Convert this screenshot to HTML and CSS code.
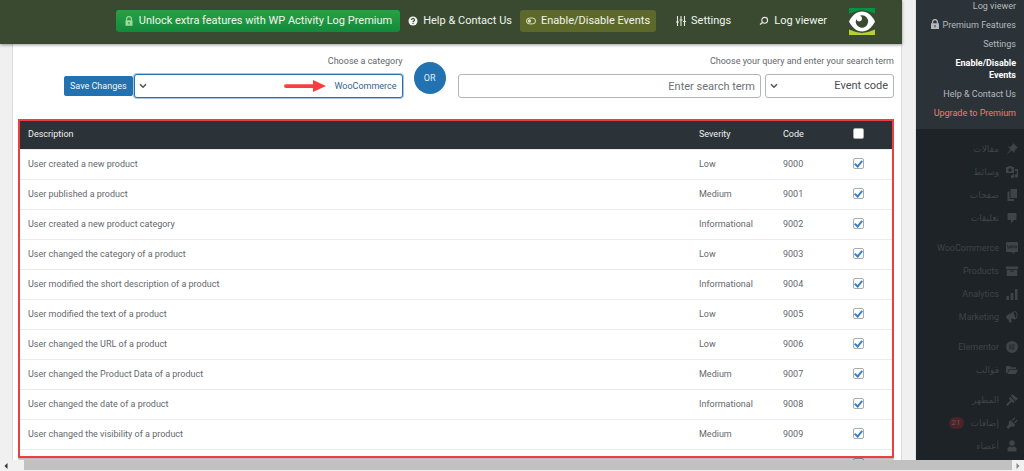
FILE: index.html
```html
<!DOCTYPE html>
<html lang="en">
<head>
<meta charset="utf-8">
<title>Enable/Disable Events</title>
<link rel="stylesheet" href="styles.css">
</head>
<body>
<div class="screen">
  <main class="main">
    <nav class="topbar" aria-label="Activity log">
      <a class="nav-link nav-link--premium" href="#"><svg class="icon" viewBox="0 0 10 10"><path d="M2.6 4.5V3a2.4 2.4 0 0 1 4.8 0v1.500" fill="none" stroke="#9bdb9d" stroke-width="1.200"/><path fill="#9bdb9d" fill-rule="evenodd" d="M1.500 4.300h7v5.500h-7zM4.500 6v2.200h1V6z"/></svg>Unlock extra features with WP Activity Log Premium</a>
      <a class="nav-link nav-link--help" href="#"><svg class="icon" viewBox="0 0 10 10"><circle cx="5" cy="5" r="4.500" fill="#f2f4f0"/><path d="M3.500 4a1.500 1.400 0 1 1 2.300 1.100Q5 5.500 5 6.300M5 7v1.100" fill="none" stroke="#394a30" stroke-width="1.200"/></svg>Help &amp; Contact Us</a>
      <a class="nav-link nav-link--active" href="#"><svg class="icon" viewBox="0 0 10 10"><rect x=".5" y="2.100" width="9" height="5.800" rx="2.900" fill="none" stroke="#dde0c4"/><circle cx="3.400" cy="5" r="1.700" fill="#dde0c4"/></svg>Enable/Disable Events</a>
      <a class="nav-link nav-link--settings" href="#"><svg class="icon" viewBox="0 0 10 10"><path d="M1.500 0v10M5 0v10M8.500 0v10M0 6h3M3.500 4h3M7 5.500h3" fill="none" stroke="#e6e9e2" stroke-width="1.100"/></svg>Settings</a>
      <a class="nav-link nav-link--viewer" href="#"><svg class="icon" viewBox="0 0 10 10"><circle cx="5.700" cy="4.300" r="2.900" fill="none" stroke="#e6e9e2" stroke-width="1.100"/><path d="M3.600 6.400 1 8.500" stroke="#e6e9e2" stroke-width="1.300"/></svg>Log viewer</a>
      <svg class="logo" viewBox="0 0 26 27" role="img" aria-label="Activity log logo"><path fill="#009444" d="M0 0h26v5.500L19 3.500 13 2 7 3.500 0 5.500z"/><path fill="#b5cf34" d="M0 27h26v-5.500l-7 2.500-6 1-6-1-7-2.500z"/><path fill="#fff" d="M0 13.500C3 7.500 7.500 3.500 13 3.500S23 7.500 26 13.500C23 19.500 18.500 23.500 13 23.500S3 19.500 0 13.500z"/><path fill="#394a30" d="M13 7.300a6.200 6.200 0 1 1-5.700 3.700 2.900 2.900 0 1 0 3.600-3.300z"/></svg>
    </nav>
    <section class="panel">
      <form class="filters">
        <div class="field field--category">
          <label class="field-label" for="category">Choose a category</label>
          <div class="controls controls--category">
            <button class="save" type="button">Save Changes</button>
            <div class="select select--focus">
              <select id="category" dir="rtl"><option>WooCommerce</option></select>
              <svg class="chevron" viewBox="0 0 8 6"><path d="M1 1.200 4 4.200 7 1.200" fill="none" stroke="#555" stroke-width="1.600"/></svg>
              <svg class="arrow" viewBox="0 0 42 12"><path fill="#f93e3e" d="M2 4.200h27V0l13 6-13 6V8H2a1.900 1.900 0 0 1 0-3.800z"/></svg>
            </div>
          </div>
        </div>
        <span class="or">OR</span>
        <div class="field field--search">
          <label class="field-label" for="term">Choose your query and enter your search term</label>
          <div class="controls controls--search">
            <input class="term" id="term" type="text" dir="rtl" placeholder="Enter search term">
            <div class="select select--query">
              <select aria-label="Query" dir="rtl"><option>Event code</option></select>
              <svg class="chevron" viewBox="0 0 8 6"><path d="M1 1.200 4 4.200 7 1.200" fill="none" stroke="#555" stroke-width="1.600"/></svg>
            </div>
          </div>
        </div>
      </form>
      <div class="events-wrap">
        <table class="events">
          <thead><tr><th>Description</th><th class="severity">Severity</th><th class="code">Code</th><th class="tick"><input type="checkbox" aria-label="Select all"></th></tr></thead>
          <tbody>
            <tr><td>User created a new product</td><td>Low</td><td>9000</td><td class="tick"><input type="checkbox" aria-label="9000" checked></td></tr>
            <tr><td>User published a product</td><td>Medium</td><td>9001</td><td class="tick"><input type="checkbox" aria-label="9001" checked></td></tr>
            <tr><td>User created a new product category</td><td>Informational</td><td>9002</td><td class="tick"><input type="checkbox" aria-label="9002" checked></td></tr>
            <tr><td>User changed the category of a product</td><td>Low</td><td>9003</td><td class="tick"><input type="checkbox" aria-label="9003" checked></td></tr>
            <tr><td>User modified the short description of a product</td><td>Informational</td><td>9004</td><td class="tick"><input type="checkbox" aria-label="9004" checked></td></tr>
            <tr><td>User modified the text of a product</td><td>Low</td><td>9005</td><td class="tick"><input type="checkbox" aria-label="9005" checked></td></tr>
            <tr><td>User changed the URL of a product</td><td>Low</td><td>9006</td><td class="tick"><input type="checkbox" aria-label="9006" checked></td></tr>
            <tr><td>User changed the Product Data of a product</td><td>Medium</td><td>9007</td><td class="tick"><input type="checkbox" aria-label="9007" checked></td></tr>
            <tr><td>User changed the date of a product</td><td>Informational</td><td>9008</td><td class="tick"><input type="checkbox" aria-label="9008" checked></td></tr>
            <tr><td>User changed the visibility of a product</td><td>Medium</td><td>9009</td><td class="tick"><input type="checkbox" aria-label="9009" checked></td></tr>
            <tr><td>User modified the product</td><td>Medium</td><td>9010</td><td class="tick"><input type="checkbox" aria-label="9010" checked></td></tr>
          </tbody>
        </table>
        <div class="highlight"></div>
      </div>
    </section>
  </main>
  <aside class="sidebar">
    <nav class="submenu" aria-label="Log pages">
      <a href="#">Log viewer</a>
      <a href="#"><svg class="icon" viewBox="0 0 10 10"><path d="M2.600 4.500V3a2.400 2.400 0 0 1 4.800 0v1.500" fill="none" stroke="currentColor" stroke-width="1.300"/><path fill="currentColor" fill-rule="evenodd" d="M1 4.300h8v5.700H1zM4.500 6v2.200h1V6z"/></svg>Premium Features</a>
      <a href="#">Settings</a>
      <a class="current" href="#">Enable/Disable Events</a>
      <a href="#">Help &amp; Contact Us</a>
      <a class="upgrade" href="#">Upgrade to Premium</a>
    </nav>
    <nav class="menu" aria-label="Site">
      <div class="menu-group">
        <a href="#"><span lang="ar">مقالات</span><svg viewBox="0 0 12 12"><path d="m7 0 5 5-1.500.5-2 2 .2 2.500L5.500 7.500 0 12l4.500-5.500L2 3.600l2.600.1 2-2z"/></svg></a>
        <a href="#"><span lang="ar">وسائط</span><svg viewBox="0 0 12 12"><path fill-rule="evenodd" d="M0 1h2l.7-1h2.600L6 1h2v6H0zM4 2.200a1.800 1.800 0 1 0 0 3.600 1.800 1.800 0 0 0 0-3.600zM9 3h3v7a1.700 1.700 0 1 1-1.300-1.700V5H9zM6.500 8H8v2.500A1.600 1.600 0 1 1 6.500 9z"/></svg></a>
        <a href="#"><span lang="ar">صفحات</span><svg viewBox="0 0 12 12"><path d="M4.500 0H11v9H4.500zM1.500 2.500h2V10H8v2H1.500z"/></svg></a>
        <a href="#"><span lang="ar">تعليقات</span><svg viewBox="0 0 12 12"><path d="M2.500 1h7a1 1 0 0 1 1 1v5a1 1 0 0 1-1 1H8l-3 3.500V8H2.500a1 1 0 0 1-1-1V2a1 1 0 0 1 1-1z"/></svg></a>
      </div>
      <div class="menu-group">
        <a href="#"><span>WooCommerce</span><svg viewBox="0 0 12 12"><path d="M1 0h10a1 1 0 0 1 1 1v8a1 1 0 0 1-1 1H8l1 2-4-2H1a1 1 0 0 1-1-1V1a1 1 0 0 1 1-1z"/><path d="m1.500 3 .8 3.500L3.800 4l.7 2.500L5.300 3" fill="none" stroke="#1d2327" stroke-width=".7"/><circle cx="7" cy="4.900" r="1.100" fill="none" stroke="#1d2327" stroke-width=".7"/><circle cx="9.900" cy="4.900" r="1.100" fill="none" stroke="#1d2327" stroke-width=".7"/></svg></a>
        <a href="#"><span>Products</span><svg viewBox="0 0 12 12"><path fill-rule="evenodd" d="M0 1.500h12V4H0zM.7 4.800h10.600V11H.7zM4 5.500v1h4v-1z"/></svg></a>
        <a href="#"><span>Analytics</span><svg viewBox="0 0 12 12"><path d="M.5 8H3v4H.5zM4.700 5h2.600v7H4.700zM9 1h2.500v11H9z"/></svg></a>
        <a href="#"><span>Marketing</span><svg viewBox="0 0 12 12"><path d="M0 5.500 2 3.500 7 1l3 7-5-.2.800 3.200-2 1L2 8.200.8 8z"/><ellipse cx="8.800" cy="4.300" rx="2.300" ry="3.800" fill="none" stroke="currentColor"/></svg></a>
      </div>
      <div class="menu-group">
        <a href="#"><span>Elementor</span><svg viewBox="0 0 12 12"><path fill-rule="evenodd" d="M6 0a6 6 0 1 1 0 12A6 6 0 0 1 6 0zM3.500 3.500v5h1v-5zM5.500 3.500v1h3v-1zM5.500 5.500v1h3v-1zM5.500 7.500v1h3v-1z"/></svg></a>
        <a href="#"><span lang="ar">قوالب</span><svg viewBox="0 0 12 12"><path d="M0 2h4l1 1.300h5V5H3L1.300 9 0 9.500zM3.500 5.700H12L10 10H1.500z"/></svg></a>
      </div>
      <div class="menu-group">
        <a href="#"><span lang="ar">المظهر</span><svg viewBox="0 0 12 12"><path d="M6 0 12 4.500 9.500 7 5 2zM4.300 2.700 8.800 7.500 7 9 5.500 7.800 1.500 12 0 10.600 4.200 6.500 3 4.500z"/></svg></a>
        <a href="#"><span class="badge">21</span><span lang="ar">إضافات</span><svg viewBox="0 0 12 12"><path d="m4.300 3 5 5-1 1.300-3.500.4L2.300 12 .5 10.300 2.700 7.500 3 4.300zM5.500 3.200 8.500.2l.9.900-3 3zM7.800 5.600l3-3 .9.900-3 3z"/></svg></a>
        <a href="#"><span lang="ar">أعضاء</span><svg viewBox="0 0 12 12"><circle cx="6" cy="3" r="2.700"/><path d="M1.500 11.500V8L4 6.200l2 1 2-1L10.500 8v3.500z"/></svg></a>
      </div>
    </nav>
  </aside>
</div>
<div class="scrollbar" aria-hidden="true">
  <svg viewBox="0 0 4 6"><path fill="#333" d="M3.500 0v6L.5 3z"/></svg>
  <div class="thumb"></div>
  <svg viewBox="0 0 4 6"><path fill="#888" d="M.5 0v6l3-3z"/></svg>
</div>
</body>
</html>
```
FILE: styles.css
```css
* {
  box-sizing: border-box;
}

body {
  margin: 0;
  height: 100vh;
  display: flex;
  flex-direction: column;
  overflow: hidden;
  background: #f0f0f1;
  color: #64686c;
  font: 9px/14px Roboto, "Noto Sans", sans-serif;
}

a {
  color: inherit;
  text-decoration: none;
}

button,
input,
select {
  margin: 0;
  font: inherit;
}

.screen {
  flex: 1;
  min-height: 0;
  display: flex;
}

.main {
  flex: 1;
  min-width: 0;
  display: flex;
  flex-direction: column;
  padding-right: 13px;
  border-right: 1px solid #e3e3e4;
}

/* Top bar */
.topbar {
  z-index: 1;
  display: flex;
  align-items: center;
  justify-content: flex-end;
  height: 44px;
  padding: 0 27px 2px 0;
  background: #394a30;
  box-shadow: 0 1px 3px rgba(0, 0, 0, 0.4);
  color: #f2f4f0;
  font-size: 11px;
  white-space: nowrap;
}

.nav-link {
  display: flex;
  align-items: center;
  gap: 5px;
  height: 22px;
  padding: 0 8px;
  border-radius: 3px;
}

.nav-link--premium {
  background: linear-gradient(#2ba043, #118a3c);
}

.nav-link--active {
  padding: 0 6px;
  background: #5d682b;
}

.nav-link--settings {
  margin-left: 12px;
}

.nav-link--viewer {
  margin: 0 14px 0 12px;
}

.icon {
  flex: none;
  width: 10px;
  height: 10px;
}

.logo {
  width: 26px;
  height: 27px;
}

/* Filters */
.panel {
  flex: 1;
  min-height: 0;
  display: flex;
  flex-direction: column;
  margin-left: 12px;
  padding: 10px 7px 0 5px;
  border: solid #dcdcde;
  border-width: 0 1px;
  background: #fff;
}

.filters {
  display: flex;
  padding-left: 46px;
}

.field {
  display: flex;
  flex-direction: column;
  gap: 6px;
}

.field--category {
  flex: 339;
}

.field--search {
  flex: 437;
}

.field-label {
  text-align: right;
}

.controls {
  display: flex;
  align-items: center;
}

.controls--search {
  gap: 4px;
}

.save {
  height: 20px;
  margin-right: 1px;
  padding: 0 6px;
  border: 0;
  border-radius: 2px;
  background: #2271b1;
  color: #f0f6fa;
}

.select {
  position: relative;
  flex: 1;
}

.select select {
  display: block;
  width: 100%;
  height: 24px;
  padding: 0 5px;
  border: 1px solid #b4b5b8;
  border-radius: 3px;
  appearance: none;
  background: #fff;
  color: #4a4f54;
  font-size: 11px;
}

.select--focus select {
  border-color: #2271b1;
  box-shadow: 0 0 0 1px #a9c7e0;
  color: #35648c;
  font-size: 9px;
}

.select--query {
  flex: none;
  width: 129px;
}

.chevron {
  position: absolute;
  top: 9px;
  left: 5px;
  width: 8px;
  height: 6px;
}

.arrow {
  position: absolute;
  top: 6px;
  right: 77px;
  width: 42px;
  height: 12px;
}

.term {
  flex: 1;
  min-width: 0;
  height: 24px;
  padding: 0 5px;
  border: 1px solid #b4b5b8;
  border-radius: 3px;
  background: #fff;
  font-size: 11px;
}

.term::placeholder {
  color: #6c7177;
}

.or {
  display: grid;
  place-items: center;
  width: 32px;
  height: 32px;
  margin: 8px 12px 0 11px;
  border-radius: 50%;
  background: #2271b1;
  color: #e4eef6;
}

/* Events */
.events-wrap {
  position: relative;
  flex: 1;
  min-height: 0;
  margin-top: 21px;
  overflow: hidden;
}

.events {
  width: 100%;
  border-collapse: collapse;
  table-layout: fixed;
}

.events th,
.events td {
  height: 30px;
  padding: 0 0 0 10px;
  border-bottom: 1px solid #ececec;
  text-align: left;
}

.events th {
  background: #2c3338;
  color: #f0f0f1;
  font-weight: 400;
}

.events .severity {
  width: 84px;
}

.events .code {
  width: 70px;
}

.events .tick {
  width: 51px;
}

.events td.tick {
  padding-bottom: 2px;
}

.events input {
  display: block;
  width: 11px;
  height: 11px;
  border: 1px solid #a9abae;
  border-radius: 2px;
  appearance: none;
  background: #fff;
}

.events input:checked::before {
  content: "";
  display: block;
  width: 3px;
  height: 6px;
  margin: 0 auto;
  border: solid #3582c4;
  border-width: 0 2px 2px 0;
  transform: rotate(40deg);
}

.highlight {
  position: absolute;
  inset: 0 0 2px 0;
  border: 2px solid #ee3f3f;
  box-shadow: 0 2px 2px rgba(0, 0, 0, 0.3);
}

/* Admin sidebar */
.sidebar {
  width: 108px;
  overflow: hidden;
  background: #1d2327;
}

.submenu {
  display: flex;
  flex-direction: column;
  gap: 7px;
  height: 129px;
  padding-right: 8px;
  background: #2c3338;
  color: #b4b9be;
  line-height: 12px;
  text-align: right;
  white-space: nowrap;
}

.submenu .icon {
  margin-right: 3px;
  vertical-align: -1px;
}

.submenu .current {
  padding-left: 24px;
  color: #fff;
  font-weight: 700;
  white-space: normal;
}

.submenu .upgrade {
  color: #f27a6c;
}

.menu {
  display: flex;
  flex-direction: column;
  gap: 7px;
  padding: 8px 6px 0 0;
  color: #3f4448;
}

.menu a {
  display: flex;
  align-items: center;
  justify-content: flex-end;
  gap: 7px;
  height: 23px;
}

.menu svg {
  width: 12px;
  height: 12px;
  fill: currentColor;
}

.menu [lang="ar"] {
  font-family: "DejaVu Sans", sans-serif;
}

.badge {
  padding: 0 3px;
  border-radius: 6px;
  background: #4a2428;
  color: #70545a;
  font-size: 8px;
  line-height: 12px;
}

/* Horizontal scrollbar */
.scrollbar {
  z-index: 2;
  display: flex;
  align-items: center;
  height: 11px;
  padding: 0 4px;
  background: #f1f1f1;
}

.scrollbar svg {
  width: 4px;
  height: 6px;
}

.thumb {
  flex: 1;
  align-self: stretch;
  margin: 0 4px 1px 16px;
  background: #c1c1c1;
}
```
